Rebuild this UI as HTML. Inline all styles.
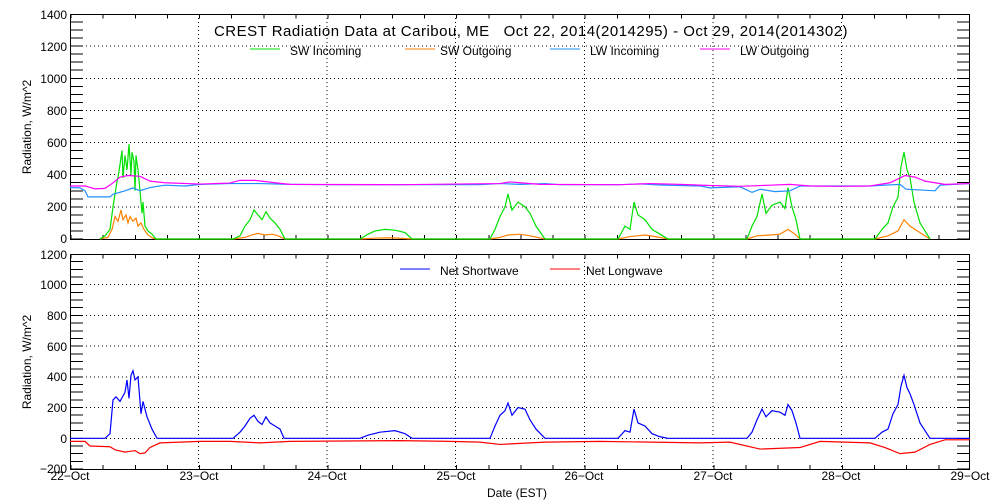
<!DOCTYPE html>
<html><head><meta charset="utf-8"><style>
html,body{margin:0;padding:0;background:#fff;}
svg{display:block;font-family:"Liberation Sans",sans-serif;}
</style></head><body>
<svg width="1000" height="500" viewBox="0 0 1000 500" xmlns="http://www.w3.org/2000/svg">
<rect width="1000" height="500" fill="#fff"/>
<g stroke="#000" fill="none" stroke-width="1" shape-rendering="crispEdges">
<g stroke-dasharray="1 3">
<line x1="70" y1="206.9" x2="970" y2="206.9"/><line x1="70" y1="174.7" x2="970" y2="174.7"/><line x1="70" y1="142.6" x2="970" y2="142.6"/><line x1="70" y1="110.4" x2="970" y2="110.4"/><line x1="70" y1="78.3" x2="970" y2="78.3"/><line x1="70" y1="46.1" x2="970" y2="46.1"/>
<line x1="198.6" y1="14" x2="198.6" y2="239"/><line x1="327.1" y1="14" x2="327.1" y2="239"/><line x1="455.7" y1="14" x2="455.7" y2="239"/><line x1="584.3" y1="14" x2="584.3" y2="239"/><line x1="712.9" y1="14" x2="712.9" y2="239"/><line x1="841.4" y1="14" x2="841.4" y2="239"/>
<line x1="70" y1="407.6" x2="970" y2="407.6"/><line x1="70" y1="376.9" x2="970" y2="376.9"/><line x1="70" y1="346.2" x2="970" y2="346.2"/><line x1="70" y1="315.5" x2="970" y2="315.5"/><line x1="70" y1="284.7" x2="970" y2="284.7"/><line x1="70" y1="438.3" x2="970" y2="438.3"/>
<line x1="198.6" y1="254" x2="198.6" y2="469"/><line x1="327.1" y1="254" x2="327.1" y2="469"/><line x1="455.7" y1="254" x2="455.7" y2="469"/><line x1="584.3" y1="254" x2="584.3" y2="469"/><line x1="712.9" y1="254" x2="712.9" y2="469"/><line x1="841.4" y1="254" x2="841.4" y2="469"/>
</g>
<rect x="70.5" y="14.5" width="899" height="225"/>
<rect x="70.5" y="254.5" width="899" height="215"/>
<line x1="76.5" y1="239.5" x2="76.5" y2="14" stroke-width="13" stroke-dasharray="1 7.036"/>
<line x1="963.5" y1="239.5" x2="963.5" y2="14" stroke-width="13" stroke-dasharray="1 7.036"/>
<line x1="76.5" y1="469.5" x2="76.5" y2="254" stroke-width="13" stroke-dasharray="1 6.68"/>
<line x1="963.5" y1="469.5" x2="963.5" y2="254" stroke-width="13" stroke-dasharray="1 6.68"/>
<line x1="70.5" y1="237" x2="970" y2="237" stroke-width="4" stroke-dasharray="1 31.14"/>
<line x1="70.5" y1="16.5" x2="970" y2="16.5" stroke-width="4" stroke-dasharray="1 31.14"/>
<line x1="70.5" y1="467" x2="970" y2="467" stroke-width="4" stroke-dasharray="1 31.14"/>
<line x1="70.5" y1="256.5" x2="970" y2="256.5" stroke-width="4" stroke-dasharray="1 31.14"/>
</g>
<g transform="translate(0,239) scale(1,-0.1607)" fill="none" stroke-width="1.2">
<polyline vector-effect="non-scaling-stroke" stroke="#ff8000" points="100,0 108,10 112,60 115,140 118,110 121,180 123,120 126,150 128,100 130,140 133,110 136,130 138,80 141,100 144,60 148,25 153,5 156,0 233,0 245,10 252,25 258,35 265,25 272,30 278,20 285,0 360,0 375,5 390,8 412,0 490,0 500,10 508,25 520,30 530,20 545,0 618,0 630,15 645,25 660,10 668,0 747,0 757,20 770,25 780,30 788,60 795,30 800,0 875,0 888,20 898,50 904,120 910,80 920,40 930,0"/>
<polyline vector-effect="non-scaling-stroke" stroke="#00e000" points="100,0 105,20 110,60 113,200 116,320 119,420 122,550 123,380 125,520 127,430 129,590 131,400 132,540 134,480 135,300 136,520 138,430 140,300 142,160 143,230 145,80 148,50 152,30 156,0 233,0 240,20 245,80 250,120 254,180 258,150 262,120 266,170 270,130 275,100 280,60 285,0 360,0 368,30 375,50 385,60 395,55 405,40 412,0 490,0 495,60 500,140 505,200 508,280 512,180 518,230 525,200 530,160 536,80 545,0 618,0 625,80 630,60 634,230 638,150 645,120 652,60 660,30 668,0 747,0 752,80 757,140 762,280 766,160 772,210 780,230 785,190 788,320 792,200 796,120 800,0 875,0 882,60 888,100 893,200 898,260 901,450 904,540 907,430 910,380 914,230 920,100 926,40 930,0"/>
<polyline vector-effect="non-scaling-stroke" stroke="#1e90ff" points="70,320 80,318 85,300 88,262 110,262 113,278 125,300 133,318 140,300 150,320 165,335 185,330 200,340 230,345 260,345 290,340 330,338 480,338 500,345 520,340 545,345 560,338 620,338 640,343 660,336 700,330 710,318 740,325 752,290 760,310 775,295 790,300 800,330 830,330 870,330 900,340 906,310 935,300 940,335 970,345"/>
<polyline vector-effect="non-scaling-stroke" stroke="#ff00ff" points="70,330 85,330 95,312 105,315 112,345 120,385 128,395 140,390 150,360 165,350 200,342 230,348 240,365 255,365 275,350 290,340 400,338 500,345 510,355 520,350 540,340 620,338 650,345 680,340 710,333 740,328 770,335 790,340 810,330 840,328 870,330 890,350 905,395 915,385 925,360 945,340 970,345"/>
</g>
<g transform="translate(0,438.3) scale(1,-0.15357)" fill="none" stroke-width="1.2">
<polyline vector-effect="non-scaling-stroke" stroke="#ff0000" points="70,-20 85,-20 90,-50 110,-55 115,-75 125,-90 135,-80 140,-100 145,-95 150,-60 160,-30 200,-20 230,-20 260,-30 290,-20 400,-15 450,-20 480,-25 500,-40 545,-25 600,-20 650,-25 700,-30 730,-25 760,-70 800,-60 820,-20 870,-30 885,-60 900,-100 915,-90 930,-40 945,-10 970,-10"/>
<polyline vector-effect="non-scaling-stroke" stroke="#0000ff" points="70,0 105,0 110,30 113,250 116,270 120,240 125,300 127,380 129,260 131,410 133,440 135,380 138,400 141,160 143,240 147,140 152,60 157,0 233,0 240,40 245,80 250,130 254,150 258,110 262,90 266,140 270,100 275,80 280,60 284,0 360,0 368,20 380,40 395,50 405,30 412,0 490,0 495,80 500,150 505,180 508,230 512,150 518,200 525,190 530,120 536,60 545,0 618,0 625,50 630,40 634,190 638,100 645,80 652,30 660,10 668,0 747,0 752,40 757,120 762,190 766,140 772,180 780,170 785,150 788,220 792,180 796,100 800,0 875,0 882,40 888,60 893,160 898,220 901,340 904,410 907,330 910,290 914,220 920,100 926,40 930,0 970,0"/>
</g>
<g font-size="12" fill="#000" text-anchor="end">
<text x="67" y="19">1400</text><text x="67" y="51">1200</text><text x="67" y="83">1000</text><text x="67" y="115">800</text><text x="67" y="147">600</text><text x="67" y="179">400</text><text x="67" y="211">200</text><text x="67" y="243">0</text>
<text x="67" y="259">1200</text><text x="67" y="289">1000</text><text x="67" y="320">800</text><text x="67" y="351">600</text><text x="67" y="381">400</text><text x="67" y="412">200</text><text x="67" y="443">0</text><text x="67" y="473">−200</text>
</g>
<g font-size="12" text-anchor="middle">
<text x="70" y="480">22−Oct</text><text x="199" y="480">23−Oct</text><text x="327" y="480">24−Oct</text><text x="456" y="480">25−Oct</text><text x="584" y="480">26−Oct</text><text x="713" y="480">27−Oct</text><text x="841" y="480">28−Oct</text><text x="970" y="480">29−Oct</text>
<text x="517" y="497">Date (EST)</text>
<text transform="translate(31,127) rotate(-90)">Radiation, W/m^2</text>
<text transform="translate(31,362) rotate(-90)">Radiation, W/m^2</text>
<text x="531" y="36" font-size="15" letter-spacing="0.5" xml:space="preserve">CREST Radiation Data at Caribou, ME   Oct 22, 2014(2014295) - Oct 29, 2014(2014302)</text>
</g>
<g font-size="12">
<line x1="250" y1="49" x2="280" y2="49" stroke="#00e000"/><text x="290" y="55">SW Incoming</text>
<line x1="405" y1="49" x2="435" y2="49" stroke="#ff8000"/><text x="440" y="55">SW Outgoing</text>
<line x1="550" y1="49" x2="580" y2="49" stroke="#1e90ff"/><text x="590" y="55">LW Incoming</text>
<line x1="700" y1="49" x2="730" y2="49" stroke="#ff00ff"/><text x="740" y="55">LW Outgoing</text>
<line x1="400" y1="269" x2="430" y2="269" stroke="#0000ff"/><text x="440" y="275">Net Shortwave</text>
<line x1="550" y1="269" x2="580" y2="269" stroke="#ff0000"/><text x="586" y="275">Net Longwave</text>
</g>
</svg>
</body></html>
